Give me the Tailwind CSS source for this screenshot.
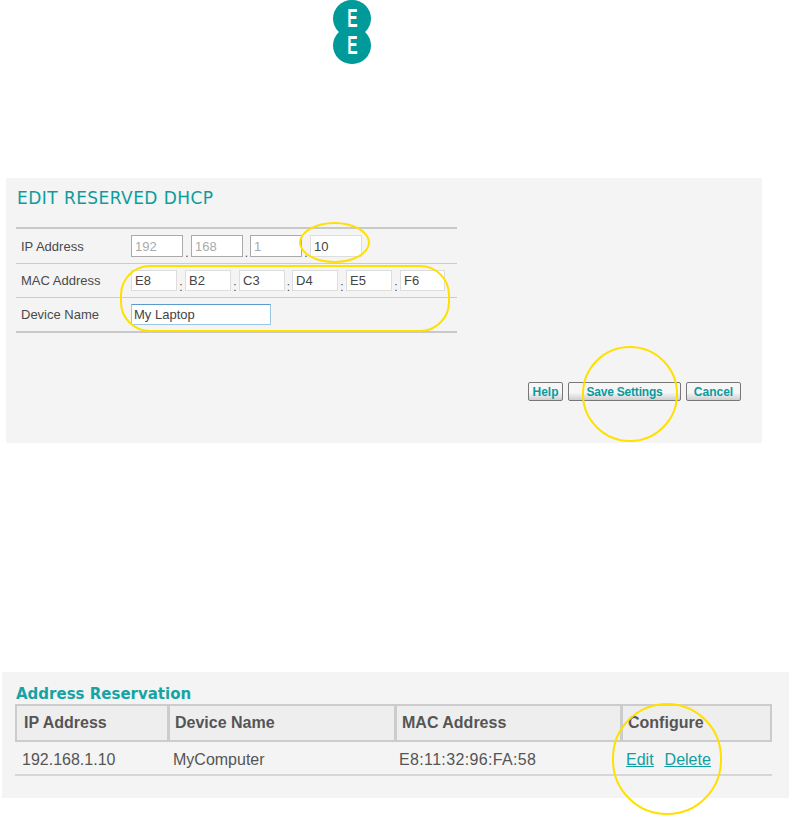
<!DOCTYPE html>
<html lang="en">
<head>
    <meta charset="UTF-8">
    <meta name="viewport" content="width=device-width, initial-scale=1.0">
    <title>Edit Reserved DHCP</title>
    <script src="https://cdn.jsdelivr.net/npm/@tailwindcss/browser@4"></script>
</head>
<body class="bg-white font-['Liberation_Sans',sans-serif] text-[#4a4a4a] w-[789px] h-[817px] overflow-hidden">

    <!-- EE logo -->
    <div class="ml-[333px] w-[38px] h-[64px] flex flex-col items-center text-white">
        <div class="w-[38px] h-[37px] shrink-0 rounded-full bg-[#009a9a] flex items-center justify-center text-[25px] font-bold leading-none"><span class="scale-x-[.62]">E</span></div>
        <div class="-mt-[10px] w-[38px] h-[37px] shrink-0 rounded-full bg-[#009a9a] flex items-center justify-center text-[25px] font-bold leading-none"><span class="scale-x-[.62]">E</span></div>
    </div>

    <!-- Edit form -->
    <div class="relative mt-[114px] ml-[6px] w-[756px] h-[265px] bg-[#f4f4f4] pt-[11px] pl-[10px]">
        <h1 class="h-[38px] pl-[1px] font-['DejaVu_Sans',sans-serif] text-[17px] leading-[18px] tracking-[.45px] text-[#0d9c9c]">EDIT RESERVED DHCP</h1>

        <div class="w-[441px] border-y-2 border-[#c8c8c8] text-[13px]">
            <div class="h-[34px] pl-[5px] flex items-center">
                <span class="w-[110px] pt-[1px]">IP Address</span>
                <input class="w-[52px] h-[22px] px-[3px] border border-[#aaa] bg-white text-[13px] text-[#aaa]" value="192">
                <span class="w-[8px] self-end text-center text-[12px] leading-[20px]">.</span>
                <input class="w-[52px] h-[22px] px-[3px] border border-[#aaa] bg-white text-[13px] text-[#aaa]" value="168">
                <span class="w-[7px] self-end text-center text-[12px] leading-[20px]">.</span>
                <input class="w-[52px] h-[22px] px-[3px] border border-[#aaa] bg-white text-[13px] text-[#aaa]" value="1">
                <span class="w-[8px] self-end text-center text-[12px] leading-[20px]">.</span>
                <input class="w-[52px] h-[22px] px-[3px] border border-[#ddd] bg-white text-[13px] text-[#444]" value="10">
            </div>
            <div class="h-[34px] pl-[5px] flex items-center border-t border-[#ccc]">
                <span class="w-[110px]">MAC Address</span>
                <input class="w-[46px] h-[21px] px-[3px] border border-[#ddd] bg-white text-[13px] text-[#444]" value="E8">
                <span class="w-[8px] self-end text-center text-[12px] leading-[20px]">:</span>
                <input class="w-[46px] h-[21px] px-[3px] border border-[#ddd] bg-white text-[13px] text-[#444]" value="B2">
                <span class="w-[8px] self-end text-center text-[12px] leading-[20px]">:</span>
                <input class="w-[46px] h-[21px] px-[3px] border border-[#ddd] bg-white text-[13px] text-[#444]" value="C3">
                <span class="w-[7px] self-end text-center text-[12px] leading-[20px]">:</span>
                <input class="w-[46px] h-[21px] px-[3px] border border-[#ddd] bg-white text-[13px] text-[#444]" value="D4">
                <span class="w-[8px] self-end text-center text-[12px] leading-[20px]">:</span>
                <input class="w-[46px] h-[21px] px-[3px] border border-[#ddd] bg-white text-[13px] text-[#444]" value="E5">
                <span class="w-[8px] self-end text-center text-[12px] leading-[20px]">:</span>
                <input class="w-[45px] h-[21px] px-[3px] border border-[#ddd] bg-white text-[13px] text-[#444]" value="F6">
            </div>
            <div class="h-[34px] pl-[5px] flex items-center border-t border-[#ccc]">
                <span class="w-[110px]">Device Name</span>
                <input class="w-[140px] h-[21px] px-[2px] border border-[#9cc7e4] border-t-[#5b9bd0] bg-white text-[13px] text-[#444]" value="My Laptop">
            </div>
        </div>

        <div class="mt-[49px] pr-[21px] flex justify-end gap-[5px] text-[12px] font-bold text-[#0a9a9e]">
            <button class="w-[35px] h-[19px] leading-none border border-[#777] rounded-[2px] bg-[linear-gradient(#f6f6f6_55%,#cfcfcf)]">Help</button>
            <button class="w-[113px] h-[19px] tracking-[-.2px] leading-none border border-[#777] rounded-[2px] bg-[linear-gradient(#f6f6f6_55%,#cfcfcf)]">Save Settings</button>
            <button class="w-[55px] h-[19px] leading-none border border-[#777] rounded-[2px] bg-[linear-gradient(#f6f6f6_55%,#cfcfcf)]">Cancel</button>
        </div>

        <!-- Yellow annotations -->
        <div class="absolute left-[293px] top-[44px] w-[71px] h-[41px] border-2 border-[#ffe000] rounded-[50%]"></div>
        <div class="absolute left-[114px] top-[87px] w-[330px] h-[67px] border-2 border-[#ffe000] rounded-[30px]"></div>
        <div class="absolute left-[576px] top-[168px] w-[96px] h-[96px] border-2 border-[#ffe000] rounded-full"></div>
    </div>

    <!-- Reservation table -->
    <div class="relative mt-[229px] ml-[2px] w-[787px] h-[126px] bg-[#f4f4f4] pt-[15px] pl-[13px]">
        <h2 class="h-[17px] pl-[1px] font-['DejaVu_Sans',sans-serif] font-bold text-[15px] leading-[15px] text-[#16a3a3]">Address Reservation</h2>

        <div class="w-[757px]">
            <div class="grid grid-cols-[150px_224px_223px_1fr] gap-[3px] p-[2px] bg-[#cccccc] h-[38px] text-[16px] font-bold text-[#555]">
                <div class="bg-[#eeeeee] pl-[7px] flex items-center">IP Address</div>
                <div class="bg-[#eeeeee] pl-[5px] flex items-center">Device Name</div>
                <div class="bg-[#eeeeee] pl-[5px] flex items-center">MAC Address</div>
                <div class="bg-[#eeeeee] pl-[5px] flex items-center">Configure</div>
            </div>
            <div class="grid grid-cols-[151px_227px_227px_1fr] h-[34px] pt-[3px] items-center border-b-2 border-[#d6d6d6] text-[16px] text-[#555]">
                <div class="pl-[7px]">192.168.1.10</div>
                <div class="pl-[7px]">MyComputer</div>
                <div class="pl-[6px] tracking-[.35px]">E8:11:32:96:FA:58</div>
                <div class="pl-[6px] flex gap-[11px] text-[#129ea3] underline">
                    <a href="#">Edit</a>
                    <a href="#">Delete</a>
                </div>
            </div>
        </div>

        <div class="absolute left-[610px] top-[31px] w-[110px] h-[112px] border-2 border-[#ffe000] rounded-full"></div>
    </div>

</body>
</html>
